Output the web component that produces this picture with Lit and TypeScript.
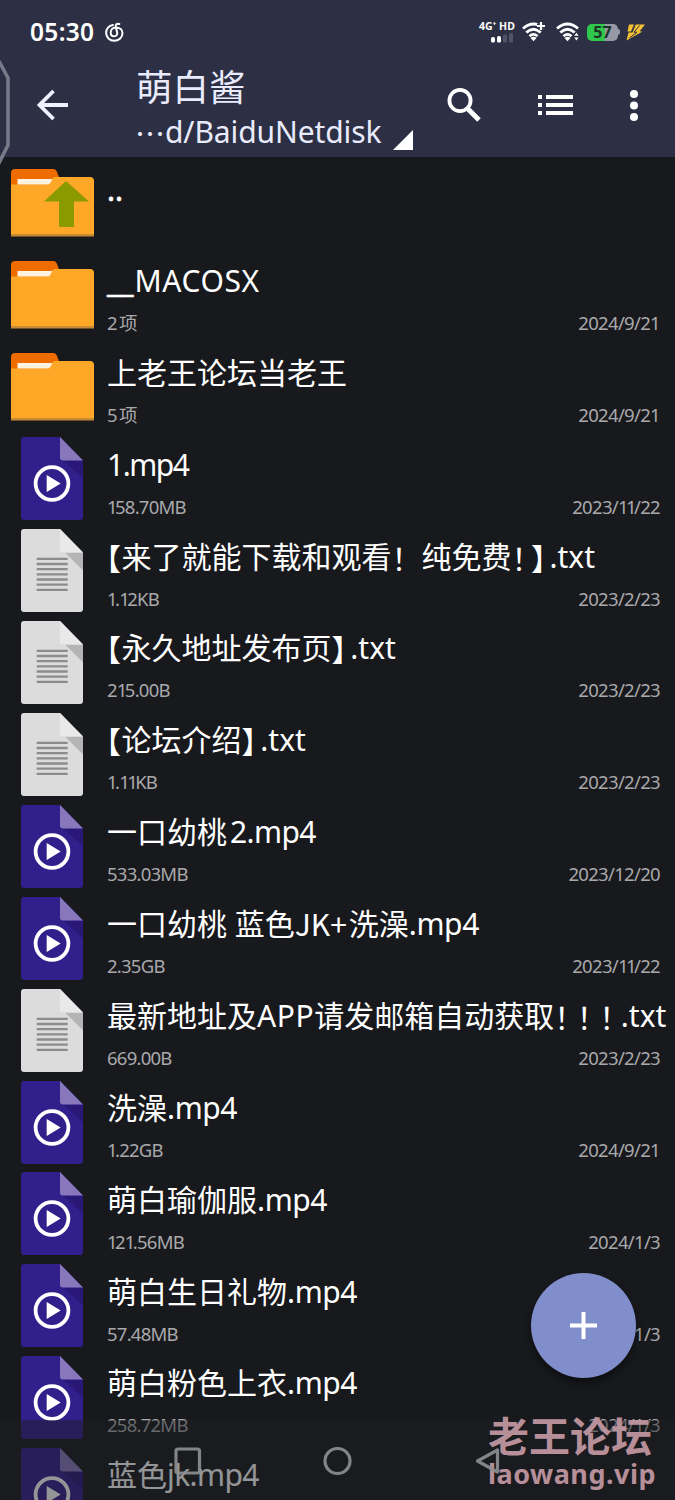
import { LitElement, html, css, svg } from "lit";
import { customElement } from "lit/decorators.js";

type Part = { t: string; c?: string };
type Row = { kind: "up" | "folder" | "video" | "text"; name: Part[]; size?: string; date?: string };

const p = (t: string, c = ""): Part => ({ t, c });

const rows: Row[] = [
  { kind: "up", name: [p("..", "parent")] },
  { kind: "folder", name: [p("__", "under"), p("MACOSX", "wide")], size: "2 项", date: "2024/9/21" },
  { kind: "folder", name: [p("上老王论坛当老王")], size: "5 项", date: "2024/9/21" },
  { kind: "video", name: [p("1.mp4", "single")], size: "158.70MB", date: "2023/11/22" },
  {
    kind: "text",
    name: [p("【", "open"), p("来了就能下载和观看"), p("！", "full"), p("纯免费"), p("！", "bang"), p("】", "close"), p(".txt", "ext")],
    size: "1.12KB",
    date: "2023/2/23",
  },
  { kind: "text", name: [p("【", "open"), p("永久地址发布页"), p("】", "close tail"), p(".txt", "ext")], size: "215.00B", date: "2023/2/23" },
  { kind: "text", name: [p("【", "open"), p("论坛介绍"), p("】", "close tail"), p(".txt", "ext")], size: "1.11KB", date: "2023/2/23" },
  { kind: "video", name: [p("一口幼桃"), p("2.mp4", "num")], size: "533.03MB", date: "2023/12/20" },
  { kind: "video", name: [p("一口幼桃 蓝色"), p("JK+", "jk"), p("洗澡"), p(".mp4", "mp")], size: "2.35GB", date: "2023/11/22" },
  {
    kind: "text",
    name: [p("最新地址及"), p("APP", "app"), p("请发邮箱自动获取"), p("！", "bang"), p("！", "bang"), p("！", "bang last"), p(".txt", "ext")],
    size: "669.00B",
    date: "2023/2/23",
  },
  { kind: "video", name: [p("洗澡"), p(".mp4", "mp")], size: "1.22GB", date: "2024/9/21" },
  { kind: "video", name: [p("萌白瑜伽服"), p(".mp4", "mp")], size: "121.56MB", date: "2024/1/3" },
  { kind: "video", name: [p("萌白生日礼物"), p(".mp4", "mp")], size: "57.48MB", date: "2024/1/3" },
  { kind: "video", name: [p("萌白粉色上衣"), p(".mp4", "mp")], size: "258.72MB", date: "2024/1/3" },
  { kind: "video", name: [p("蓝色"), p("jk.mp4", "num2")] },
];

/* The digit 1 is set narrower than the other figures. */
const narrow = (text: string, find: RegExp) =>
  text.split(find).map((s) => (/^1+$/.test(s) ? html`<i>${s}</i>` : s));

const folderArt = (up: boolean) => html`<svg class="folder" width="83" height="68" viewBox="0 0 83 68">
  <path d="M0 16V4q0-4 4-4h38q3 0 4 3l3 8-4 10H0z" fill="#ef6c00" />
  <path d="M0 15.500h36q2 0 3-2l2-3.500q1.200-2 3.500-2H79q4 0 4 4V67H0z" fill="#ffa726" />
  <path d="M6.500 10H41.500l-2.500 4.200q-.8 1.300-2.500 1.300h-30z" fill="#fff3e0" />
  <path d="M0 65h83v2.500H0z" fill="#c78a35" />
  ${up ? svg`<path d="M55 12l23 20.500H63V58H48V32.500H33z" fill="#8a9a00" />` : ""}
</svg>`;

const videoArt = html`<svg class="file" width="62" height="83" viewBox="0 0 62 83">
  <path d="M3 0h36l23 23.500V80q0 3-3 3H3q-3 0-3-3V3q0-3 3-3z" fill="#311f8c" />
  <path d="M42 23.500h20v18z" fill="#2a1878" />
  <path d="M39 0l23 23.500H42q-3 0-3-3z" fill="#8878bb" />
  <circle cx="31" cy="46.500" r="16.400" fill="none" stroke="#fff" stroke-width="3.800" />
  <path d="M25.700 38l14 8.500-14 8.500z" fill="#fff" />
</svg>`;

const textArt = html`<svg class="file" width="62" height="83" viewBox="0 0 62 83">
  <path d="M3 0h36l23 23.500V80q0 3-3 3H3q-3 0-3-3V3q0-3 3-3z" fill="#dcdcdc" />
  <path d="M44 23.500h18v18z" fill="#b5b5b5" />
  <path d="M39 0l23 23.500H42q-3 0-3-3z" fill="#e9e9e9" />
  <path d="M15.700 29.800h31M15.700 35h31M15.700 40.200h31M15.700 45.300h31M15.700 50.500h31M15.700 55.700h31M15.700 60.800h31" stroke="#8c8c8c" stroke-width="2.300" />
</svg>`;

const wifi = (badge: unknown) => html`<svg class="wifi" width="25" height="20" viewBox="0 0 25 20">
  <g fill="none" stroke="#fff" stroke-width="2.800">
    <path d="M1 6.500Q11.500-2.500 22 6.500" />
    <path d="M4.300 10.500Q11.500 4 18.700 10.500" />
    <path d="M7.500 14.200Q11.500 10.500 15.500 14.200" />
  </g>
  <path d="M8.500 16q3-2.500 6 0l-3 3.300z" fill="#fff" />
  ${badge}
</svg>`;

@customElement("app-root")
export class AppRoot extends LitElement {
  static styles = css`
    :host {
      display: block;
      position: relative;
      width: 675px;
      height: 1500px;
      overflow: hidden;
      background: #18191d;
      color: #fff;
      font-family: "Noto Sans", "Noto Sans CJK SC", sans-serif;
    }
    svg { display: block; flex: none; }
    .top { height: 157px; background: #2d3044; display: flex; flex-direction: column; }
    .status { height: 64px; display: flex; align-items: center; padding: 0 30px; box-sizing: border-box; }
    .clock { font-size: 24.500px; font-weight: 600; line-height: 30px; width: 75px; letter-spacing: 0.3px; white-space: nowrap; }
    .swirl { margin-right: auto; }
    .net { display: flex; flex-direction: column; width: 43px; height: 23px; }
    .netlabel { font-size: 10.500px; line-height: 10px; font-weight: 700; white-space: nowrap; }
    .bars { margin: 1px 0 0 11.500px; }
    .wifi { margin-right: 8.500px; }
    .battery { width: 31px; height: 17px; border-radius: 5px; background: linear-gradient(90deg, #2fc84d 57%, #9698a5 57%); color: #1d3328; font-size: 16px; line-height: 17px; font-weight: 700; text-align: center; margin-left: -2px; }
    .nub { width: 2px; height: 6px; border-radius: 0 2px 2px 0; background: #9698a5; margin-right: 6px; }
    .bar { display: flex; height: 93px; align-items: flex-start; padding-left: 36px; }
    .back { margin: 25px 67px 0 0; }
    .heading { width: 311px; display: flex; flex-direction: column; color: #e9ebfc; white-space: nowrap; }
    .title { font-size: 36.500px; line-height: 44px; font-family: "Noto Sans CJK SC", sans-serif; }
    .path { display: flex; align-items: flex-end; height: 42px; font-size: 30px; line-height: 36px; margin-left: -1px; }
    .dots { font-family: "Noto Sans CJK SC", sans-serif; }
    .dest { letter-spacing: -0.1px; }
    .corner { margin: 0 0 0 12px; }
    .search { margin: 24px 57px 0 0; }
    .list { margin: 31px 57px 0 0; }
    .more { margin-top: 26px; }
    .row { height: 91.890px; display: flex; }
    .art { width: 107px; height: 92.500px; display: flex; flex: none; align-items: center; padding-left: 11px; box-sizing: border-box; }
    .file { margin-left: 10.400px; }
    .info { flex: 1; min-width: 0; display: flex; flex-direction: column; }
    .name { height: 40px; margin-top: 12px; font-size: 30px; line-height: 40px; white-space: nowrap; display: flex; }
    .name span { white-space: pre; }
    .open, .close { width: 15px; font-feature-settings: "halt"; font-family: "Noto Sans CJK SC", sans-serif; }
    .open { margin-left: -1px; margin-right: 0.5px; }
    .tail { width: 18px; }
    .full, .bang { width: 30px; font-family: "Noto Sans CJK SC", sans-serif; }
    .bang { width: 22.500px; }
    .last { width: 21.500px; }
    .close { margin-left: -3px; margin-right: 3.500px; }
    .tail { margin-left: 0; margin-right: 0.8px; }
    .num { margin-left: 3px; letter-spacing: -0.6px; }
    .num2 { letter-spacing: -0.6px; }
    .mp { letter-spacing: -0.4px; }
    .single { letter-spacing: -1.500px; }
    .parent { position: relative; top: 1px; -webkit-text-stroke: 0.7px #fff; }
    .jk { width: 54px; font-family: "Noto Sans CJK SC", sans-serif; line-height: 39px; }
    .app { letter-spacing: 0.6px; }
    .under { width: 27.500px; -webkit-text-stroke: 0.5px #fff; }
    .wide { letter-spacing: 0.6px; }
    .meta { display: flex; justify-content: space-between; font-size: 18.500px; line-height: 26px; height: 26px; margin-top: 9px; padding-right: 15px; color: #a9a9ac; letter-spacing: -0.75px; word-spacing: -2px; }
    .size i { font-style: normal; letter-spacing: -2.600px; }
    .date { letter-spacing: -0.68px; }
    .date i { font-style: normal; letter-spacing: -2.600px; }
    .edge { position: absolute; left: 0; top: 58px; }
    .fab { position: absolute; left: 530.500px; top: 1273px; width: 105px; height: 105px; border-radius: 50%; background: #808ecb; box-shadow: 0 5px 9px rgba(0, 0, 0, 0.45); display: flex; align-items: center; justify-content: center; }
    .nav { position: absolute; left: 0; right: 0; top: 1420px; height: 80px; background: rgba(28, 29, 34, 0.47); }
    .keys { position: absolute; left: 0; top: 1440px; }
    .mark { position: absolute; left: 488px; top: 1410px; color: #c499a4; font-weight: 700; opacity: 0.92; white-space: nowrap; }
    .cn { font-family: "Noto Sans CJK SC", sans-serif; font-size: 41px; line-height: 48px; }
    .site { font-size: 27px; line-height: 32px; letter-spacing: 0.5px; }
  `;

  private art(kind: Row["kind"]) {
    if (kind === "video") return videoArt;
    if (kind === "text") return textArt;
    return folderArt(kind === "up");
  }

  render() {
    return html`
      <div class="top" lang="zh-CN">
        <div class="status">
          <div class="clock">05:30</div>
          <svg class="swirl" width="19" height="20" viewBox="0 0 19 20" fill="none" stroke="#fff" stroke-width="2" stroke-linecap="round">
            <path d="M8 3C3.800 3.600 1.100 7 1.100 10.700c0 4.500 3.500 8.100 8.200 8.100s8.200-3.500 8.200-7.800c0-3.400-2.800-5.600-6.500-5.600-3.400 0-5.300 2.500-5.300 5 0 2.400 1.500 3.900 3.600 3.900s3.200-1.600 2.900-3.600L10.800 4.500c-.3-2 1.300-3.500 3.500-2.500" />
          </svg>
          <div class="net">
            <div class="netlabel">4G⁺ HD</div>
            <svg class="bars" width="22" height="11" viewBox="0 0 22 11">
              <rect x="0" y="5" width="4" height="5.500" rx="1.500" fill="#fff" />
              <rect x="6" y="4" width="4" height="6.500" rx="1.500" fill="#fff" />
              <rect x="12" y="2.500" width="4" height="8" rx="1.500" fill="#515467" />
              <rect x="18" y="1" width="4" height="9.500" rx="1.500" fill="#515467" />
            </svg>
          </div>
          ${wifi(svg`<path d="M19 0v8M15 4h8" stroke="#2d3044" stroke-width="5" /><path d="M19 0v8M15 4h8" stroke="#fff" stroke-width="2.200" />`)}
          ${wifi(svg`<path d="M17 14.500l3.300-5 3.300 5v1.500l-3.300 4-3.300-4z" fill="#2d3044" /><path d="M18.200 13.700l2.200-3 2.200 3zM18.200 15.500l2.200 3 2.200-3z" fill="#fff" />`)}
          <div class="battery">57</div>
          <div class="nub"></div>
          <svg width="19" height="17" viewBox="0 0 19 17"><path d="M3 .5h5L5 7.500H1.500z" fill="#f5c033" /><path d="M9.800 .5H19L13.500 7.500h3L.5 16.500 2.500 8.500h4z" fill="#f5c033" /><path d="M13.500 1.500L8 8.200h3L3.500 14" stroke="#2d3044" stroke-width="1" fill="none" /></svg>
        </div>
        <div class="bar">
          <svg class="back" width="33" height="32" viewBox="0 0 33 32" fill="none" stroke="#f0f1ff" stroke-width="3.800"><path d="M32 16H4M17.500 2L3.500 16l14 14" /></svg>
          <div class="heading">
            <div class="title">萌白酱</div>
            <div class="path">
              <span class="dots">…</span><span class="dest">d/BaiduNetdisk</span>
              <svg class="corner" width="20" height="20" viewBox="0 0 20 20"><path d="M20 0v20H0z" fill="#fff" /></svg>
            </div>
          </div>
          <svg class="search" width="34" height="34" viewBox="0 0 34 34" fill="none" stroke="#fff"><circle cx="13" cy="12.500" r="10.600" stroke-width="3.800" /><path d="M21 21l11 11" stroke-width="5" /></svg>
          <svg class="list" width="35" height="20" viewBox="0 0 35 20"><path d="M0 0h4v4H0zM8 0h27v4H8zM0 8h4v4H0zM8 8h27v4H8zM0 16h4v4H0zM8 16h27v4H8z" fill="#fff" /></svg>
          <svg class="more" width="8" height="31" viewBox="0 0 8 31" fill="#fff"><circle cx="4" cy="4" r="4" /><circle cx="4" cy="15.500" r="4" /><circle cx="4" cy="27" r="4" /></svg>
        </div>
      </div>
      ${rows.map(
        (r) => html`<div class="row" lang="zh-CN">
          <div class="art">${this.art(r.kind)}</div>
          <div class="info">
            <div class="name">${r.name.map((s) => html`<span class=${s.c ?? ""}>${s.t}</span>`)}</div>
            ${r.size
              ? html`<div class="meta"><span class="size">${narrow(r.size, /(1)/)}</span><span class="date">${narrow(r.date ?? "", /(11)/)}</span></div>`
              : ""}
          </div>
        </div>`
      )}
      <svg class="edge" width="12" height="110" viewBox="0 0 12 110"><path d="M-1 3L8 20v67L-2 107" fill="none" stroke="#777a89" stroke-width="3.500" /></svg>
      <div class="fab"><svg width="27" height="27" viewBox="0 0 27 27"><path d="M13.500 0v27M0 13.500h27" stroke="#fff" stroke-width="4" /></svg></div>
      <div class="nav"></div>
      <div class="mark" lang="zh-CN"><div class="cn">老王论坛</div><div class="site">laowang.vip</div></div>
      <svg class="keys" width="675" height="40" viewBox="0 0 675 40" fill="none" stroke="#8f9093" stroke-opacity=".9" stroke-width="3.200" stroke-linejoin="round">
        <rect x="176" y="9" width="23.500" height="24" rx="2" />
        <circle cx="337.500" cy="21" r="12.500" />
        <path d="M497.500 10v22L477.500 21z" />
      </svg>
    `;
  }
}
